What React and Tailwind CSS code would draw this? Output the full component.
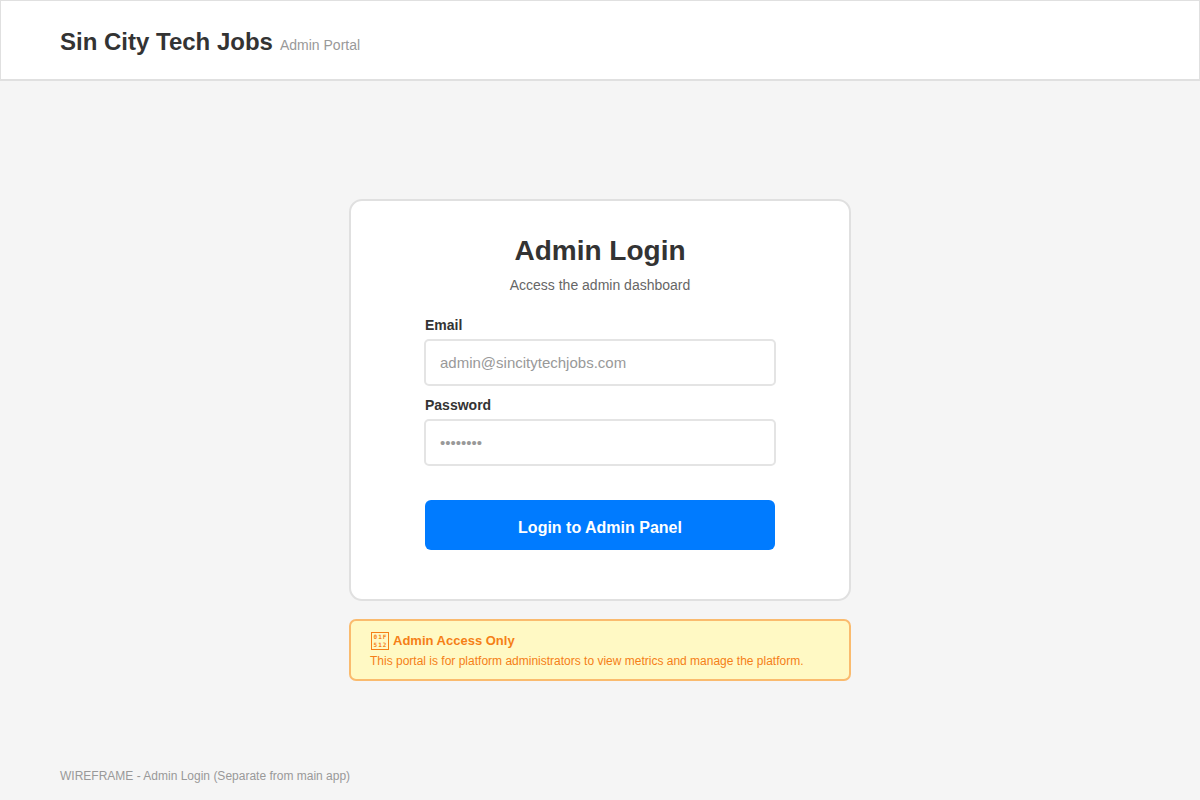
export default function App() {
  return (
    <div className="flex min-h-screen flex-col bg-[#f5f5f5] font-['Liberation_Sans',Arial,sans-serif] text-[#333333]">
      <header className="border border-b-2 border-[#e0e0e0] bg-white px-[59px] pt-[25px] pb-[21px]">
        <div className="flex items-baseline gap-[7px]">
          <h1 className="text-2xl leading-8 font-bold">Sin City Tech Jobs</h1>
          <span className="text-sm text-[#999999]">Admin Portal</span>
        </div>
      </header>

      <main className="flex grow flex-col items-center justify-center gap-[18px] px-4 pt-[30px]">
        <section className="w-full max-w-[502px] rounded-[13px] border-2 border-[#e0e0e0] bg-white px-[73px] pt-8 pb-[49px]">
          <h2 className="text-center text-[28px] leading-9 font-bold">Admin Login</h2>
          <p className="mt-[6px] text-center text-sm text-[#666666]">Access the admin dashboard</p>

          <form className="mt-5 flex flex-col" onSubmit={(e) => e.preventDefault()}>
            <label htmlFor="email" className="px-px text-sm font-bold">Email</label>
            <input
              id="email"
              type="email"
              placeholder="admin@sincitytechjobs.com"
              className="mt-1 h-[47px] rounded-[5px] border-2 border-[#e4e4e4] bg-white px-3.5 text-[15px] placeholder:text-[#999999]"
            />
            <label htmlFor="password" className="mt-[9px] px-px text-sm font-bold">Password</label>
            <input
              id="password"
              type="password"
              placeholder="••••••••"
              className="mt-1 h-[47px] rounded-[5px] border-2 border-[#e4e4e4] bg-white px-3.5 text-[15px] placeholder:text-[#999999]"
            />
            <button type="submit" className="mx-px mt-[34px] h-[50px] rounded-md bg-[#007bff] pt-1.5 font-bold text-white">
              Login to Admin Panel
            </button>
          </form>
        </section>

        <aside className="w-full max-w-[502px] rounded-[7px] border-2 border-[#fabb6e] bg-[#fff9c4] px-[19px] pt-2.5 pb-2 text-[#f57f17]">
          <h3 className="flex items-center gap-1 px-px text-[13px] leading-5 font-bold">
            <span
              aria-hidden="true"
              className="grid h-[18px] w-[18px] grid-cols-3 content-center border border-[#f57f17] px-px text-center font-['DejaVu_Sans_Mono',monospace] text-[6px] leading-[8px]"
            >
              <span>0</span>
              <span>1</span>
              <span>F</span>
              <span>5</span>
              <span>1</span>
              <span>2</span>
            </span>
            Admin Access Only
          </h3>
          <p className="text-xs leading-5">
            This portal is for platform administrators to view metrics and manage the platform.
          </p>
        </aside>
      </main>

      <footer className="px-[60px] pb-4 text-xs text-[#999999]">
        WIREFRAME - Admin Login (Separate from main app)
      </footer>
    </div>
  );
}
